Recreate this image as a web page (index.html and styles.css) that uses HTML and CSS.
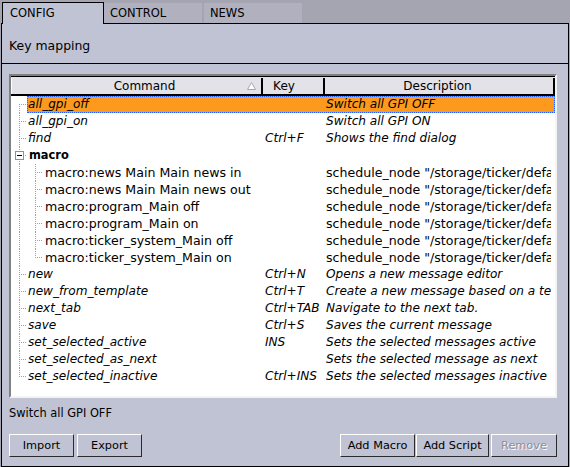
FILE: index.html
```html
<!DOCTYPE html>
<html>
<head>
<meta charset="utf-8">
<link rel="stylesheet" href="styles.css">
</head>
<body>
<div class="tabs">
  <div class="tab active">CONFIG</div>
  <div class="tab">CONTROL</div>
  <div class="tab news">NEWS</div>
</div>
<div class="panel">
  <div class="title">Key mapping</div>
  <div class="content">
    <div class="list">
      <div class="head">
        <div class="hc hc-cmd">Command<svg class="sort" width="9" height="8" viewBox="0 0 9 8"><path d="M4.5 0.5 L8.5 7.5 L0.5 7.5 Z" fill="#fff" stroke="#a8a8b0" stroke-width="1"/></svg></div>
        <div class="hc hc-key">Key</div>
        <div class="hc hc-desc">Description</div>
      </div>
      <div class="rows">
        <div class="row"><span class="ind tee first"></span><div class="cells sel"><span class="cmd">all_gpi_off</span><span class="key"></span><span class="desc">Switch all GPI OFF</span></div></div>
        <div class="row"><span class="ind tee"></span><div class="cells"><span class="cmd">all_gpi_on</span><span class="key"></span><span class="desc">Switch all GPI ON</span></div></div>
        <div class="row"><span class="ind tee"></span><div class="cells"><span class="cmd">find</span><span class="key">Ctrl+F</span><span class="desc">Shows the find dialog</span></div></div>
        <div class="row"><span class="ind tee"><span class="exp"></span></span><div class="cells"><span class="cmd group">macro</span><span class="key"></span><span class="desc"></span></div></div>
        <div class="row child"><span class="ind pipe"></span><span class="ind tee"></span><div class="cells"><span class="cmd">macro:news Main Main news in</span><span class="key"></span><span class="desc">schedule_node "/storage/ticker/default/macros/news_in"</span></div></div>
        <div class="row child"><span class="ind pipe"></span><span class="ind tee"></span><div class="cells"><span class="cmd">macro:news Main Main news out</span><span class="key"></span><span class="desc">schedule_node "/storage/ticker/default/macros/news_out"</span></div></div>
        <div class="row child"><span class="ind pipe"></span><span class="ind tee"></span><div class="cells"><span class="cmd">macro:program_Main off</span><span class="key"></span><span class="desc">schedule_node "/storage/ticker/default/macros/program_off"</span></div></div>
        <div class="row child"><span class="ind pipe"></span><span class="ind tee"></span><div class="cells"><span class="cmd">macro:program_Main on</span><span class="key"></span><span class="desc">schedule_node "/storage/ticker/default/macros/program_on"</span></div></div>
        <div class="row child"><span class="ind pipe"></span><span class="ind tee"></span><div class="cells"><span class="cmd">macro:ticker_system_Main off</span><span class="key"></span><span class="desc">schedule_node "/storage/ticker/default/macros/ticker_off"</span></div></div>
        <div class="row child"><span class="ind pipe"></span><span class="ind tee last"></span><div class="cells"><span class="cmd">macro:ticker_system_Main on</span><span class="key"></span><span class="desc">schedule_node "/storage/ticker/default/macros/ticker_on"</span></div></div>
        <div class="row"><span class="ind tee"></span><div class="cells"><span class="cmd">new</span><span class="key">Ctrl+N</span><span class="desc">Opens a new message editor</span></div></div>
        <div class="row"><span class="ind tee"></span><div class="cells"><span class="cmd">new_from_template</span><span class="key">Ctrl+T</span><span class="desc">Create a new message based on a template</span></div></div>
        <div class="row"><span class="ind tee"></span><div class="cells"><span class="cmd">next_tab</span><span class="key">Ctrl+TAB</span><span class="desc">Navigate to the next tab.</span></div></div>
        <div class="row"><span class="ind tee"></span><div class="cells"><span class="cmd">save</span><span class="key">Ctrl+S</span><span class="desc">Saves the current message</span></div></div>
        <div class="row"><span class="ind tee"></span><div class="cells"><span class="cmd">set_selected_active</span><span class="key">INS</span><span class="desc">Sets the selected messages active</span></div></div>
        <div class="row"><span class="ind tee"></span><div class="cells"><span class="cmd">set_selected_as_next</span><span class="key"></span><span class="desc">Sets the selected message as next</span></div></div>
        <div class="row"><span class="ind tee last"></span><div class="cells"><span class="cmd">set_selected_inactive</span><span class="key">Ctrl+INS</span><span class="desc">Sets the selected messages inactive</span></div></div>
      </div>
    </div>
    <div class="status">Switch all GPI OFF</div>
    <div class="btns">
      <div class="grp">
        <button class="b-import">Import</button>
        <button class="b-export">Export</button>
      </div>
      <div class="grp right">
        <button class="b-macro">Add Macro</button>
        <button class="b-script">Add Script</button>
        <button class="b-remove" disabled>Remove</button>
      </div>
    </div>
  </div>
</div>
</body>
</html>
```

FILE: styles.css
```css
* { box-sizing: border-box; }

body {
  margin: 0;
  width: 570px;
  height: 467px;
  overflow: hidden;
  background: #a5a4b1;
  font-family: "DejaVu Sans", Verdana, sans-serif;
  color: #000;
}

.tabs {
  display: flex;
  align-items: flex-end;
  height: 23px;
  padding-left: 2px;
}

.tab {
  width: 98px;
  height: 20px;
  background: #b1b0be;
  font-size: 11.5px;
  line-height: 16px;
  padding: 2px 0 0 6px;
}

.tab.news { margin-left: 2px; }

.tab.active {
  position: relative;
  z-index: 1;
  width: 102px;
  height: 22px;
  margin-bottom: -1px;
  background: #bfc3d4;
  border: 1px solid #000;
  border-bottom: 0;
  padding: 2px 0 0 7px;
}

.panel {
  margin-left: 1px;
  width: 568px;
  height: 444px;
  border: 1px solid #000;
  background: #bfc3d4;
  display: flex;
  flex-direction: column;
}

.title {
  height: 40px;
  border-bottom: 1px solid #000;
  padding: 14px 0 0 7px;
  font-size: 12.45px;
  line-height: 16px;
}

.content {
  flex: 1;
  padding: 10px 10px 0 7px;
  display: flex;
  flex-direction: column;
}

.list {
  width: 548px;
  height: 324px;
  background: #fff;
  border: 2px solid;
  border-color: #808080 #f4f4f4 #f4f4f4 #808080;
  overflow: hidden;
}

.head {
  display: flex;
  height: 20px;
  background: #e2e2e8;
  border-top: 1px solid #000;
  border-bottom: 2px solid #000;
  font-size: 12px;
  line-height: 16px;
  padding-top: 1px;
}

.hc {
  position: relative;
  text-align: center;
  border-right: 2px solid #000;
  white-space: nowrap;
}

.hc-cmd {
  width: 252px;
  border-left: 1px solid #fff;
  padding-left: 16px;
}

.hc-key {
  width: 62px;
  padding-right: 18px;
}

.hc-desc {
  width: 230px;
  padding-right: 3px;
}

.sort {
  position: absolute;
  right: 5px;
  top: 4px;
}

.rows {
  font-size: 12.1px;
}

.row {
  display: flex;
  height: 17px;
  line-height: 17px;
  white-space: nowrap;
}

.ind {
  position: relative;
  flex: none;
  width: 16px;
  height: 17px;
}

.ind::before {
  content: "";
  position: absolute;
  left: 8px;
  top: 0;
  bottom: 0;
  width: 1px;
  background: linear-gradient(#a0a0a0 50%, transparent 50%) 0 0 / 1px 2px;
}

.ind.first::before { top: 8px; }
.ind.last::before { bottom: auto; height: 9px; }

.ind.tee::after {
  content: "";
  position: absolute;
  left: 9px;
  top: 8px;
  width: 7px;
  height: 1px;
  background: linear-gradient(to right, transparent 50%, #a0a0a0 50%) 0 0 / 2px 1px;
}

.exp {
  position: absolute;
  z-index: 1;
  left: 4px;
  top: 4px;
  width: 9px;
  height: 9px;
  border: 1px solid #909090;
  background: #fff;
}

.exp::after {
  content: "";
  position: absolute;
  left: 1px;
  top: 3px;
  width: 5px;
  height: 1px;
  background: #000;
}

.cells {
  flex: 1;
  min-width: 0;
  display: grid;
  grid-template-columns: 1fr 62px 230px;
}

.cells.sel {
  background: #fd9a1e;
  outline: 1px dotted #1f5fff;
  outline-offset: -1px;
}

.cmd {
  padding-left: 1px;
  font-style: italic;
  overflow: hidden;
}

.cmd.group {
  font-style: normal;
  font-weight: bold;
  font-size: 11.4px;
  padding-left: 2px;
}

.key {
  padding-left: 2px;
  font-style: italic;
  overflow: hidden;
}

.desc {
  padding-left: 1px;
  margin-right: 4px;
  font-style: italic;
  overflow: hidden;
}

.row.child .cmd,
.row.child .desc {
  font-style: normal;
  font-size: 12.6px;
}

.row.child .cmd { padding-left: 2px; }

.status {
  margin-top: 7px;
  font-size: 11.4px;
  line-height: 16px;
}

.btns {
  margin-top: 13px;
  display: flex;
  justify-content: space-between;
}

.grp { display: flex; }
.grp.right { margin-right: 1px; }

button {
  height: 23px;
  padding: 0;
  font-family: "DejaVu Sans", Verdana, sans-serif;
  font-size: 11.3px;
  color: #000;
  background: #bfc3d4;
  border: 1px solid;
  border-color: #fff #2a2a2a #2a2a2a #fff;
  border-radius: 0;
}

.b-import { width: 65px; }
.b-export { width: 65px; margin-left: 3px; }
.b-macro { width: 75px; }
.b-script { width: 73px; margin-left: 1px; }
.b-remove {
  width: 66px;
  margin-left: 2px;
  color: #8c90a0;
  text-shadow: 1px 1px 0 #fff;
}
```
